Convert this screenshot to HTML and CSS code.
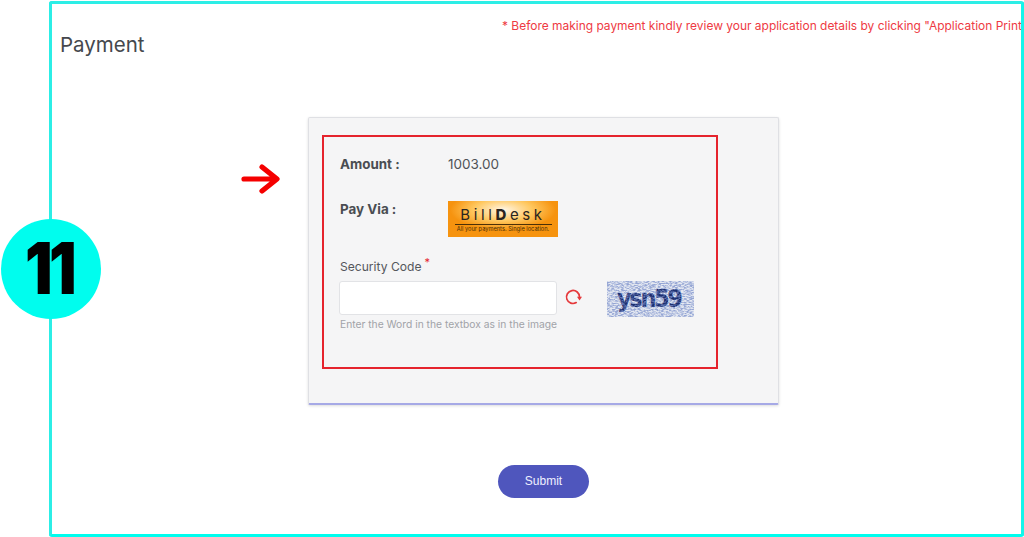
FILE: index.html
```html
<!DOCTYPE html>
<html lang="en">
<head>
<meta charset="utf-8">
<title>Payment</title>
<link rel="stylesheet" href="styles.css">
</head>
<body>
<main class="frame">
  <p class="notice">* Before making payment kindly review your application details by clicking "Application Print</p>
  <h1 class="title">Payment</h1>
  <div class="stage">
    <svg class="arrow" viewBox="0 0 39 30" aria-hidden="true"><path d="M3 15H35M21 3L36 15L21 27" fill="none" stroke="#f50000" stroke-width="5.2" stroke-linecap="round" stroke-linejoin="round"/></svg>
    <section class="card">
      <div class="panel">
        <div class="row amount-row">
          <span class="label">Amount :</span>
          <span class="value">1003.00</span>
        </div>
        <div class="row via-row">
          <span class="label">Pay Via :</span>
          <div class="billdesk">
            <span class="bd-name">Bill<b>D</b>esk</span>
            <span class="bd-tag">All your payments. Single location.</span>
          </div>
        </div>
        <label class="code-label" for="code">Security Code<sup class="req">*</sup></label>
        <div class="code-row">
          <div class="code-field">
            <input class="code-input" id="code" type="text">
            <span class="hint">Enter the Word in the textbox as in the image</span>
          </div>
          <svg class="refresh" viewBox="0 0 18 18" aria-hidden="true"><path d="M12.25 14.6A6.5 6.5 0 1 1 15.5 9" fill="none" stroke="#e5383b" stroke-width="1.7" stroke-linecap="round"/><path d="M13 8.8H18L15.5 12.6Z" fill="#e5383b"/></svg>
          <svg class="captcha" viewBox="0 0 87 36" role="img" aria-label="captcha">
            <defs>
              <filter id="noise" x="0" y="0" width="100%" height="100%">
                <feTurbulence type="fractalNoise" baseFrequency="0.35 0.85" numOctaves="2" seed="7"/>
                <feColorMatrix values="0 0 0 0 0.2  0 0 0 0 0.28  0 0 0 0 0.6  3.4 0 0 0 -1.25"/>
              </filter>
            </defs>
            <rect width="87" height="36" fill="#e4e8f1"/>
            <text class="captcha-text" x="10" y="26" textLength="66" lengthAdjust="spacing">ysn59</text>
            <rect width="87" height="36" filter="url(#noise)" opacity=".75"/>
          </svg>
        </div>
      </div>
    </section>
  </div>
  <div class="actions"><button class="submit" type="button">Submit</button></div>
</main>
<div class="badge"><span class="badge-num">11</span></div>
</body>
</html>
```
FILE: styles.css
```css
* { box-sizing: border-box; }
html, body { margin: 0; height: 537px; overflow: hidden; background: #fff; }
body { font-family: Inter, "Liberation Sans", sans-serif; color: #4a4d52; }
.frame {
  margin: 1px 0 0 49px;
  width: 975px;
  height: 536px;
  border: 3px solid #2ceee6;
  border-right-color: #14f5ea;
  border-bottom-color: #00fdee;
  border-radius: 3px;
  overflow: hidden;
}
.notice {
  margin: 14px 0 0 450px;
  font-size: 11.96px;
  line-height: 16px;
  color: #ee3a43;
  white-space: nowrap;
}
.title {
  margin: -3px 0 0 8px;
  font-size: 20.5px;
  line-height: 28px;
  font-weight: 400;
  color: #45484d;
}
.stage {
  display: flex;
  align-items: flex-start;
  margin-top: 58px;
}
.arrow {
  width: 39px;
  height: 30px;
  margin: 47px 0 0 189px;
  flex: none;
}
.card {
  margin-left: 28px;
  width: 471px;
  height: 288px;
  padding: 17px 0 0 13px;
  background: #f5f5f6;
  border: 1px solid #dfe0e4;
  border-bottom: 2px solid #a6a9e6;
  border-radius: 2px;
  box-shadow: 0 1px 3px rgba(0,0,0,.14);
}
.panel {
  width: 396px;
  height: 234px;
  border: 2px solid #e5232d;
  padding: 18px 0 0 16px;
}
.row { display: flex; }
.label {
  width: 108px;
  font-size: 13.4px;
  line-height: 18px;
  font-weight: 700;
  color: #4a4d52;
}
.value { font-size: 13.5px; line-height: 18px; color: #4f5257; }
.via-row { margin-top: 19px; }
.via-row .label { margin-top: 8px; }
.billdesk {
  width: 110px;
  height: 36px;
  margin-top: 9px;
  display: flex;
  flex-direction: column;
  align-items: center;
  background: radial-gradient(ellipse 48% 55% at 50% 25%, #fff6e6 0%, #ffc860 55%, #f6930f 100%);
  color: #2a2520;
}
.bd-name {
  font-size: 15px;
  line-height: 17px;
  margin-top: 5px;
  letter-spacing: 3.6px;
  padding-bottom: 1px;
  width: 97px;
  text-align: center;
  border-bottom: 1px solid #4b3008;
}
.bd-name b { font-weight: 800; }
.bd-tag { font-size: 5.7px; line-height: 8px; color: #4b3008; white-space: nowrap; }
.code-label {
  display: block;
  margin-top: 22px;
  font-size: 12.1px;
  line-height: 16px;
  color: #54575c;
}
.req { color: #e5232d; font-size: 11px; line-height: 0; margin-left: 3px; }
.code-row { display: flex; align-items: flex-start; margin: 6px 0 0 -1px; }
.code-field { display: flex; flex-direction: column; width: 218px; flex: none; }
.code-input {
  height: 34px;
  width: 218px;
  background: #fff;
  border: 1px solid #e2e3e6;
  border-radius: 3px;
}
.hint { margin-top: 2px; padding-left: 1px; font-size: 10.28px; line-height: 14px; color: #a1a3a8; white-space: nowrap; }
.refresh { width: 18px; height: 18px; margin: 7px 0 0 7px; flex: none; }
.captcha { width: 87px; height: 36px; margin: 0 0 0 25px; flex: none; }
.captcha-text {
  font-family: "DejaVu Sans Condensed", "DejaVu Sans", sans-serif;
  font-stretch: condensed;
  font-size: 25px;
  font-weight: 700;
  fill: #1d2f6f;
}
.actions { display: flex; margin-top: 60px; padding-left: 446px; }
.submit {
  width: 91px;
  height: 33px;
  padding: 0 0 2px;
  border: 0;
  border-radius: 17px;
  background: #4f56bd;
  color: #eef0ff;
  font-family: "Liberation Sans", Arial, sans-serif;
  font-size: 12px;
}
.badge {
  position: absolute;
  left: 1px;
  top: 219px;
  width: 100px;
  height: 100px;
  border-radius: 50%;
  background: #00fdee;
  color: #000;
  font-size: 71px;
  font-weight: 900;
  line-height: 98px;
  text-align: center;
}
.badge-num {
  display: inline-block;
  letter-spacing: -4px;
  margin-left: -4px;
  transform: scaleX(.86);
}
```
